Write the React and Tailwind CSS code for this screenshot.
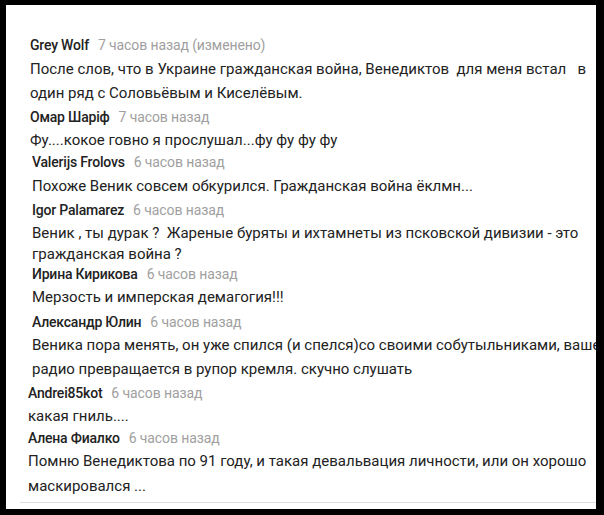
import React from "react";

const rows = [
  { t: "n", h: 24, pl: 30, name: "Grey Wolf", time: "7 часов назад (изменено)" },
  { t: "b", h: 24, pl: 30, text: "После слов, что в Украине гражданская война, Венедиктов  для меня встал   в" },
  { t: "b", h: 24, pl: 30, text: "один ряд с Соловьёвым и Киселёвым." },
  { t: "n", h: 24, pl: 30, name: "Омар Шаріф", time: "7 часов назад" },
  { t: "b", h: 22, pl: 30, text: "Фу....кокое говно я прослушал...фу фу фу фу" },
  { t: "n", h: 23, pl: 32, name: "Valerijs Frolovs", time: "6 часов назад" },
  { t: "b", h: 24, pl: 32, text: "Похоже Веник совсем обкурился. Гражданская война ёклмн..." },
  { t: "n", h: 24, pl: 32, name: "Igor Palamarez", time: "6 часов назад" },
  { t: "b", h: 22, pl: 32, text: "Веник , ты дурак ?  Жареные буряты и ихтамнеты из псковской дивизии - это" },
  { t: "b", h: 20, pl: 32, text: "гражданская война ?" },
  { t: "n", h: 21, pl: 32, name: "Ирина Кирикова", time: "6 часов назад" },
  { t: "b", h: 25, pl: 32, text: "Мерзость и имперская демагогия!!!" },
  { t: "n", h: 24, pl: 32, name: "Александр Юлин", time: "6 часов назад" },
  { t: "b", h: 23, pl: 32, text: "Веника пора менять, он уже спился (и спелся)со своими собутыльниками, ваше" },
  { t: "b", h: 24, pl: 32, text: "радио превращается в рупор кремля. скучно слушать" },
  { t: "n", h: 24, pl: 28, name: "Andrei85kot", time: "6 часов назад" },
  { t: "b", h: 22, pl: 28, text: "какая гниль...." },
  { t: "n", h: 22, pl: 28, name: "Алена Фиалко", time: "6 часов назад" },
  { t: "b", h: 25, pl: 28, text: "Помню Венедиктова по 91 году, и такая девальвация личности, или он хорошо" },
  { t: "b", h: 24, pl: 28, text: "маскировался ..." },
];

const plClass = { 28: "pl-[22px]", 30: "pl-[24px]", 32: "pl-[26px]" };
const hClass = {
  20: "h-[20px]",
  21: "h-[21px]",
  22: "h-[22px]",
  23: "h-[23px]",
  24: "h-[24px]",
  25: "h-[25px]",
};

export default function App() {
  return (
    <div className="w-[604px] h-[515px] bg-black pl-[6px] pr-[8px] pt-[5px] pb-[6px] overflow-hidden">
      <div
        className="w-full h-full bg-white overflow-hidden pt-[28px] flex flex-col"
        style={{ fontFamily: "Roboto, 'Noto Sans', sans-serif" }}
      >
        {rows.map((r, i) =>
          r.t === "n" ? (
            <div
              key={i}
              className={`${hClass[r.h]} ${plClass[r.pl]} flex items-center whitespace-nowrap shrink-0`}
            >
              <span className="text-[14px] font-medium text-[#222] tracking-[-0.2px]">{r.name}</span>
              <span className="text-[14px] text-[#a0a0a0] ml-[9px] tracking-[-0.1px]">{r.time}</span>
            </div>
          ) : (
            <div
              key={i}
              className={`${hClass[r.h]} ${plClass[r.pl]} flex items-center whitespace-pre shrink-0 text-[15px] text-[#222]`}
            >
              {r.text}
            </div>
          )
        )}
        <div className="mt-[4px] ml-[14px] h-px bg-[#dcdcdc] shrink-0" />
      </div>
    </div>
  );
}
